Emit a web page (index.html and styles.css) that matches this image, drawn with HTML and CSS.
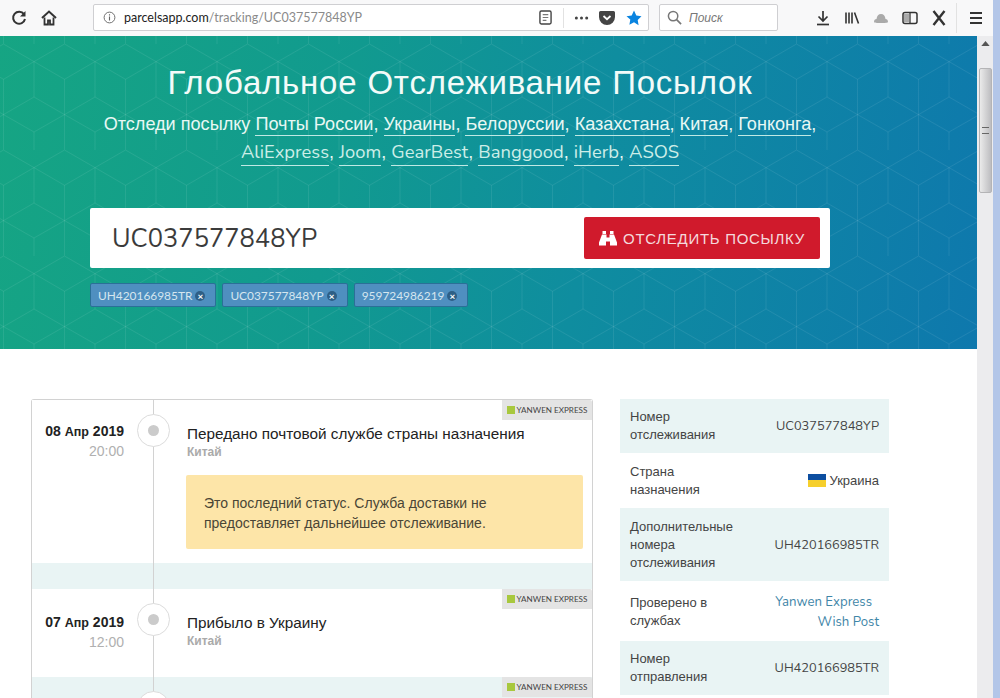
FILE: index.html
```html
<!DOCTYPE html>
<html lang="ru">
<head>
<meta charset="utf-8">
<title>Глобальное Отслеживание Посылок</title>
<link rel="stylesheet" href="styles.css">
</head>
<body>
<div class="window">
<div class="main">
  <header class="toolbar">
    <div class="nav-icons">
      <svg class="tb-icon" viewBox="0 0 16 16"><path d="M13 4.2A6 6 0 1 0 14 9" fill="none" stroke="#333" stroke-width="2"/><path d="M14.5 1v5.5H9z" fill="#333"/></svg>
      <svg class="tb-icon" viewBox="0 0 16 16"><path d="M1 8l7-6.5L15 8" fill="none" stroke="#333" stroke-width="2"/><path d="M3.5 7.5V14.5H7V10.5H9V14.5H12.5V7.5" fill="none" stroke="#333" stroke-width="1.8"/></svg>
    </div>
    <div class="urlbar">
      <svg class="info" viewBox="0 0 14 14"><circle cx="7" cy="7" r="5.8" fill="none" stroke="#666" stroke-width="1"/><path d="M7 6v4.2M7 3.6v1.2" stroke="#666" stroke-width="1.2"/></svg>
      <span class="url"><span class="url-host">parcelsapp.com</span>/tracking/UC037577848YP</span>
      <svg class="reader" viewBox="0 0 14 16"><rect x="1" y="1" width="12" height="14" rx="1.5" fill="none" stroke="#444" stroke-width="1.5"/><path d="M4 5h6M4 8h6M4 11h4" stroke="#777" stroke-width="1.3"/></svg>
      <span class="url-sep"></span>
      <svg class="dots" viewBox="0 0 16 4"><circle cx="2.5" cy="2" r="1.6" fill="#444"/><circle cx="8" cy="2" r="1.6" fill="#444"/><circle cx="13.5" cy="2" r="1.6" fill="#444"/></svg>
      <svg class="pocket" viewBox="0 0 16 14"><path d="M1.5 0h13A1.5 1.5 0 0 1 16 1.5V6a8 8 0 0 1-16 0V1.500A1.500 1.500 0 0 1 1.500 0z" fill="#444"/><path d="M4.500 5L8 8.200 11.500 5" fill="none" stroke="#fff" stroke-width="1.800"/></svg>
      <svg class="star" viewBox="0 0 16 16"><path d="M8 .6l2.300 4.900 5.200.7-3.800 3.700.9 5.400L8 12.200l-4.600 2.600.9-5.400L.5 6.200l5.200-.7z" fill="#0a84e0"/></svg>
    </div>
    <div class="searchbar">
      <svg class="search-icon" viewBox="0 0 16 16"><circle cx="6.500" cy="6.500" r="5" fill="none" stroke="#777" stroke-width="1.600"/><path d="M10 10l5 5" stroke="#777" stroke-width="1.800"/></svg>
      <span class="search-text">Поиск</span>
    </div>
    <div class="tools">
      <svg class="tool" viewBox="0 0 16 16"><path d="M8 1v9M3.500 6.500L8 11l4.500-4.500" fill="none" stroke="#333" stroke-width="1.700"/><path d="M2 14.500h12" stroke="#333" stroke-width="1.700"/></svg>
      <svg class="tool" viewBox="0 0 16 16"><path d="M2 2.500v11M5 2.500v11M8 2.500v11M10.500 2.500l4 11" fill="none" stroke="#333" stroke-width="1.600"/></svg>
      <svg class="tool" viewBox="0 0 16 16"><path d="M1 12c0-2 1-3 2.500-3 .5-3.500 2-5 4.500-5s4 1.500 4.500 5c1.500 0 2.500 1 2.500 3 0 .8-3 1-7 1s-7-.2-7-1z" fill="#aaa"/></svg>
      <svg class="tool" viewBox="0 0 16 16"><rect x="1" y="2.500" width="14" height="11" rx="2" fill="none" stroke="#333" stroke-width="1.500"/><rect x="2" y="4" width="5" height="8" fill="#aaa"/><path d="M8 3v10" stroke="#333" stroke-width="1.300"/></svg>
      <svg class="tool tool-x" viewBox="0 0 14 16"><path d="M1.500 1L12.500 15M12.500 1L1.500 15" fill="none" stroke="#333" stroke-width="2.400"/></svg>
      <span class="tool-sep"></span>
      <svg class="tool" viewBox="0 0 16 16"><path d="M2 3h12M2 8h12M2 13h12" stroke="#333" stroke-width="1.800"/></svg>
    </div>
  </header>

  <div class="viewport">
    <main class="page">
      <section class="hero">
        <svg class="hero-pattern" width="977" height="313" aria-hidden="true">
          <defs>
            <pattern id="hex" width="61" height="106" patternUnits="userSpaceOnUse" x="34" y="8">
              <path d="M30.500 0L61 17.600V53L30.500 70.600L0 53V17.600ZM30.500 35.300V70.600M30.500 35.300L0 17.600M30.500 35.300L61 17.600M30.500 70.600V106M0 88L30.500 70.600L61 88M0 88V106M61 88V106" fill="none" stroke="#fff" stroke-opacity=".08" stroke-width="1"/>
            </pattern>
          </defs>
          <rect width="977" height="313" fill="url(#hex)"/>
        </svg>
        <div class="hero-inner">
          <h1 class="hero-title">Глобальное Отслеживание Посылок</h1>
          <p class="hero-sub">Отследи посылку <a class="hl">Почты России</a>, <a class="hl">Украины</a>, <a class="hl">Белоруссии</a>, <a class="hl">Казахстана</a>, <a class="hl">Китая</a>, <a class="hl">Гонконга</a>,<br><a class="hl lat">AliExpress</a>, <a class="hl lat">Joom</a>, <a class="hl lat">GearBest</a>, <a class="hl lat">Banggood</a>, <a class="hl lat">iHerb</a>, <a class="hl lat">ASOS</a></p>
          <div class="track-box">
            <span class="track-input lat">UC037577848YP</span>
            <button class="track-btn">
              <svg class="binoculars" viewBox="0 0 18 15"><path d="M3.500 0h3.500v3H3.500zM11 0h3.500v3H11zM3 3.500h4.500v3h3v-3H15l3 8v3h-7v-4H7v4H0v-3z" fill="#fff"/></svg>
              Отследить посылку
            </button>
          </div>
          <div class="chips">
            <span class="chip">UH420166985TR<i class="chip-x">×</i></span>
            <span class="chip">UC037577848YP<i class="chip-x">×</i></span>
            <span class="chip">959724986219<i class="chip-x">×</i></span>
          </div>
        </div>
      </section>

      <section class="content">
        <div class="timeline">
          <article class="event event-first">
            <div class="ev-date"><b class="ev-day">08 <small>Апр</small> 2019</b><span class="ev-time">20:00</span></div>
            <div class="ev-node"><span class="ev-dot"></span></div>
            <div class="ev-body">
              <div class="ev-title">Передано почтовой службе страны назначения</div>
              <div class="ev-place">Китай</div>
              <div class="notice">Это последний статус. Служба доставки не предоставляет дальнейшее отслеживание.</div>
            </div>
            <span class="carrier"><i class="carrier-logo"></i>YANWEN EXPRESS</span>
          </article>
          <article class="event event-second">
            <div class="ev-date"><b class="ev-day">07 <small>Апр</small> 2019</b><span class="ev-time">12:00</span></div>
            <div class="ev-node"><span class="ev-dot"></span></div>
            <div class="ev-body">
              <div class="ev-title">Прибыло в Украину</div>
              <div class="ev-place">Китай</div>
            </div>
            <span class="carrier"><i class="carrier-logo"></i>YANWEN EXPRESS</span>
          </article>
          <article class="event event-shaded">
            <div class="ev-date"></div>
            <div class="ev-node"><span class="ev-dot"></span></div>
            <div class="ev-body"></div>
            <span class="carrier"><i class="carrier-logo"></i>YANWEN EXPRESS</span>
          </article>
        </div>

        <aside class="info-table">
          <div class="info-row info-shaded"><span class="info-label">Номер отслеживания</span><span class="info-value lat">UC037577848YP</span></div>
          <div class="info-row info-country"><span class="info-label">Страна назначения</span><span class="info-value info-plain"><i class="flag"></i>Украина</span></div>
          <div class="info-row info-shaded info-tall"><span class="info-label">Дополнительные номера отслеживания</span><span class="info-value lat">UH420166985TR</span></div>
          <div class="info-row info-services"><span class="info-label">Проверено в службах</span><span class="info-value info-links lat"><a class="svc svc-first">Yanwen Express</a><a class="svc">Wish Post</a></span></div>
          <div class="info-row info-shaded"><span class="info-label">Номер отправления</span><span class="info-value lat">UH420166985TR</span></div>
        </aside>
      </section>
    </main>
    <div class="scrollbar">
      <svg class="scroll-arrow" viewBox="0 0 10 6"><path d="M5 0l5 6H0z" fill="#555"/></svg>
      <div class="scroll-thumb"><span class="scroll-grip"></span></div>
    </div>
  </div>
</div>
<div class="window-edge"></div>
</div>
</body>
</html>
```
FILE: styles.css
```css
* { box-sizing: border-box; }
html, body { margin: 0; height: 100%; overflow: hidden; }
body { font-family: "Liberation Sans", Arial, sans-serif; color: #333; background: #fff; }
.lat { font-family: "Nunito", "Lato", "Liberation Sans", sans-serif; }

.window { width: 1000px; height: 698px; display: flex; overflow: hidden; }
.main { width: 993px; flex: none; display: flex; flex-direction: column; }
.window-edge { width: 7px; flex: none; background: #b3c6e8; }

/* browser toolbar */
.toolbar { height: 36px; flex: none; display: flex; align-items: center; background: #f8f8f9; padding: 0 0 0 11px; }
.nav-icons { display: flex; gap: 14px; width: 82px; }
.tb-icon { width: 16px; height: 16px; }
.urlbar { width: 556px; height: 27px; background: #fff; border: 1px solid #cfcfd2; border-radius: 2px; display: flex; align-items: center; padding: 0 6px 0 9px; margin-top: -1px; }
.info { width: 13px; height: 13px; margin-right: 8px; }
.url { font-size: 12.500px; color: #8a8a8a; flex: 1; font-family: "Lato", "Liberation Sans", sans-serif; }
.url-host { color: #222; }
.reader { width: 13px; height: 15px; margin-right: 11px; }
.url-sep { width: 1px; height: 20px; background: #e2e2e2; margin-right: 10px; }
.dots { width: 15px; height: 4px; margin-right: 10px; }
.pocket { width: 16px; height: 14px; margin-right: 11px; }
.star { width: 16px; height: 16px; }
.searchbar { width: 119px; height: 27px; margin-left: 10px; margin-top: -1px; background: #fff; border: 1px solid #cfcfd2; border-radius: 2px; display: flex; align-items: center; padding-left: 7px; gap: 7px; }
.search-icon { width: 15px; height: 15px; }
.search-text { font-size: 12px; font-style: italic; color: #777; }
.tools { display: flex; align-items: center; margin-left: 37px; gap: 13px; }
.tool { width: 16px; height: 16px; flex: none; }
.tool-x { width: 14px; height: 16px; margin-left: 1px; }
.tool-sep { width: 1px; height: 30px; background: #e2e2e2; margin: 0 -2px 0 -3px; }

.viewport { flex: 1; display: flex; min-height: 0; }
.page { width: 977px; flex: none; overflow: hidden; background: #fff; }
.scrollbar { width: 16px; flex: none; background: #ececee; padding: 0 1px 0 2px; display: flex; flex-direction: column; align-items: center; }
.scroll-arrow { width: 9px; height: 5px; margin: 5px 0 22px; flex: none; }
.scroll-thumb { width: 100%; height: 125px; border-radius: 2px; background: linear-gradient(90deg, #eaeaea, #bdbdc0); border: 1px solid #b4b4b6; display: flex; align-items: center; justify-content: center; }
.scroll-grip { width: 7px; height: 7px; border-top: 1px solid #666; border-bottom: 1px solid #666; }

/* hero */
.hero { position: relative; height: 313px; overflow: hidden; background: linear-gradient(100deg, #16a583 0%, #119a8f 35%, #0f8d9f 60%, #0e78ad 100%); color: #fff; }
.hero-pattern { position: absolute; left: 0; top: 0; }
.hero-inner { position: relative; width: 740px; margin-left: 90px; padding-top: 27px; text-align: center; }
.hero-title { margin: 0; font-size: 33px; line-height: 40px; font-weight: 400; letter-spacing: .8px; color: #f2fbf9; white-space: nowrap; }
.hero-sub { margin: 7px 0 0; font-size: 18.100px; line-height: 28px; color: #e8f8f4; white-space: nowrap; }
.hl { color: #e8f8f4; border-bottom: 1px solid #bfe9e4; padding-bottom: 1px; }
.hl.lat { font-size: 18.400px; color: #cdeee8; }

.track-box { margin-top: 42px; height: 60px; background: #fff; border-radius: 2px; display: flex; align-items: center; justify-content: space-between; padding: 0 10px 0 22px; }
.track-input { font-size: 25.500px; color: #3b3b3b; }
.track-btn { width: 236px; height: 42px; border: 0; border-radius: 2px; background: #d01a2c; color: #f4d9dc; font-family: "Liberation Sans", sans-serif; font-size: 15px; text-transform: uppercase; letter-spacing: .7px; display: flex; align-items: center; justify-content: center; gap: 6px; padding: 0; }
.binoculars { width: 18px; height: 15px; }
.chips { display: flex; gap: 6px; margin-top: 15px; }
.chip { height: 24px; display: flex; align-items: center; padding: 0 10px 0 7px; background: #4f8fc0; border: 1px solid #2a7097; border-radius: 2px; font-family: "Lato", "Liberation Sans", sans-serif; font-size: 11.900px; color: #d5e6ef; }
.chip-x { width: 10px; height: 10px; margin-left: 3px; margin-top: 2px; border-radius: 50%; background: #2e5f86; color: #fff; font-style: normal; font-size: 10px; line-height: 10px; font-weight: 700; text-align: center; }

/* content */
.content { display: flex; align-items: flex-start; padding: 50px 0 0 31px; gap: 27px; }
.timeline { width: 562px; flex: none; border: 1px solid #d2d2d2; border-bottom: 0; border-radius: 3px 3px 0 0; }
.event { position: relative; display: grid; grid-template-columns: 121px 1fr; background: #fff; height: 88px; }
.event-first { height: 189px; border-bottom: 26px solid #e9f4f4; }
.event-shaded { background: #e9f4f4; height: 80px; }
.ev-date { grid-column: 1; grid-row: 1; padding: 22px 29px 0 0; width: 121px; text-align: right; display: flex; flex-direction: column; }
.event-second .ev-date { padding-top: 24px; }
.ev-day { font-size: 14px; line-height: 19px; color: #222; white-space: nowrap; }
.ev-day small { font-size: 12.500px; }
.ev-time { font-size: 14px; line-height: 18px; color: #b0b0b0; }
.ev-node { position: absolute; left: 121px; top: 0; bottom: 0; width: 1px; background: #d2d2d2; }
.event-first .ev-node { bottom: -26px; }
.ev-dot { position: absolute; left: -16px; top: 14px; width: 33px; height: 33px; border-radius: 50%; background: #fff; border: 1px solid #dcdcdc; }
.ev-dot::after { content: ""; position: absolute; left: 10px; top: 10px; width: 11px; height: 11px; border-radius: 50%; background: #cbcbcb; }
.ev-body { grid-column: 2; grid-row: 1; padding: 24px 9px 0 33px; }
.ev-title { font-size: 15.300px; line-height: 19px; color: #222; white-space: nowrap; padding-left: 1px; }
.ev-place { font-size: 12px; line-height: 18px; color: #aaa; font-weight: 700; padding-left: 1px; }
.notice { margin-top: 14px; height: 74px; padding: 18px 60px 0 18px; background: #fde5a8; font-size: 14px; line-height: 20px; color: #4a4636; border-radius: 2px; }
.carrier { position: absolute; right: 0; top: 0; width: 90px; height: 20px; background: #e4e4e4; display: flex; align-items: center; justify-content: center; gap: 2px; font-family: "Lato", "Liberation Sans", sans-serif; font-size: 8.100px; color: #444; white-space: nowrap; border-radius: 0 2px 0 0; }
.carrier-logo { width: 8px; height: 8px; background: #a8c83e; }

.info-table { width: 269px; flex: none; font-size: 13px; line-height: 18px; color: #444; }
.info-row { display: flex; align-items: center; justify-content: space-between; padding: 9px 10px; min-height: 54px; }
.info-shaded { background: #e9f4f4; }
.info-country { min-height: 55px; }
.info-tall { min-height: 73px; }
.info-services { min-height: 60px; padding: 11px 10px 9px; }
.info-label { width: 115px; flex: none; }
.info-value { flex: 1; text-align: right; font-size: 12.800px; white-space: nowrap; }
.info-plain { font-size: 13px; }
.info-links { display: flex; flex-direction: column; align-items: flex-end; line-height: 20px; font-size: 13.200px; }
.svc { color: #3f86a8; }
.svc-first { padding-right: 7px; }
.flag { display: inline-block; width: 18px; height: 13px; margin-right: 4px; vertical-align: -2px; background: linear-gradient(#0d4ea0 50%, #f6cf2c 50%); }
```
